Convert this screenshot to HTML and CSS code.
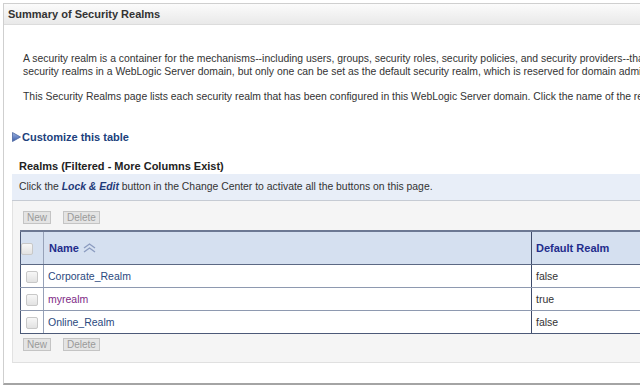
FILE: index.html
```html
<!DOCTYPE html>
<html lang="en">
<head>
  <meta charset="UTF-8" />
  <title>Summary of Security Realms</title>
  <link rel="stylesheet" href="styles.css">
</head>
<body>
  <div class="panel">
    <div class="title-bar">Summary of Security Realms</div>

    <div class="panel-body">
      <div class="intro">
        <p>A security realm is a container for the mechanisms--including users, groups, security roles, security policies, and security providers--that are used to protect WebLogic resources. You can have multiple<br>security realms in a WebLogic Server domain, but only one can be set as the default security realm, which is reserved for domain administrators.</p>
        <p>This Security Realms page lists each security realm that has been configured in this WebLogic Server domain. Click the name of the realm to explore and configure that realm.</p>
      </div>

      <a class="customize" href="#">
        <svg class="expand-icon" width="9" height="10" viewBox="0 0 9 10">
          <defs>
            <linearGradient id="tri" x1="0" y1="0" x2="0" y2="1">
              <stop offset="0" stop-color="#9db4e4"/>
              <stop offset="1" stop-color="#3c5ea8"/>
            </linearGradient>
          </defs>
          <polygon points="0.5,0.5 8.5,5 0.5,9.5" fill="url(#tri)" stroke="#4a64a0" stroke-width="0.8"/>
        </svg>
        Customize this table
      </a>

      <div class="realms">
        <h3 class="realms-title">Realms (Filtered - More Columns Exist)</h3>
        <div class="notice">Click the <em>Lock &amp; Edit</em> button in the Change Center to activate all the buttons on this page.</div>

        <div class="table-area">
          <div class="controls">
            <button disabled>New</button>
            <button disabled>Delete</button>
          </div>

          <table class="realm-table">
            <thead>
              <tr>
                <th class="col-check"><span class="checkbox"></span></th>
                <th class="col-name">Name
                  <svg class="sort-icon" width="15" height="10" viewBox="0 0 15 10">
                    <polyline points="2,5 7.5,1 13,5" fill="none" stroke="#8c9cc0" stroke-width="1.4"/>
                    <polyline points="2,9 7.5,5 13,9" fill="none" stroke="#8c9cc0" stroke-width="1.4"/>
                  </svg>
                </th>
                <th class="col-default">Default Realm</th>
              </tr>
            </thead>
            <tbody>
              <tr>
                <td class="col-check"><span class="checkbox"></span></td>
                <td class="col-name"><a href="#">Corporate_Realm</a></td>
                <td class="col-default">false</td>
              </tr>
              <tr>
                <td class="col-check"><span class="checkbox"></span></td>
                <td class="col-name"><a class="visited" href="#">myrealm</a></td>
                <td class="col-default">true</td>
              </tr>
              <tr>
                <td class="col-check"><span class="checkbox"></span></td>
                <td class="col-name"><a href="#">Online_Realm</a></td>
                <td class="col-default">false</td>
              </tr>
            </tbody>
          </table>

          <div class="controls controls-bottom">
            <button disabled>New</button>
            <button disabled>Delete</button>
          </div>
        </div>
      </div>
    </div>
  </div>
</body>
</html>
```

FILE: styles.css
```css
html, body {
  overflow: hidden;
}
body {
  margin: 0;
  padding: 0;
  background: #fff;
  font-family: "Liberation Sans", Arial, sans-serif;
  font-size: 10.4px;
  color: #333;
}
.panel {
  width: 1000px;
  height: 379px;
  margin: 3px 0 0 3px;
  border: 1px solid #cfcfcf;
  border-bottom: 2px solid #a4a4a4;
  display: flex;
  flex-direction: column;
}
.title-bar {
  height: 20px;
  line-height: 20px;
  padding-left: 4px;
  font-size: 11px;
  font-weight: bold;
  color: #333;
  background: linear-gradient(#fbfbfb, #e9e9e9);
  border-bottom: 1px solid #dcdcdc;
}
.panel-body {
  padding: 27px 0 0 8px;
}
.intro {
  padding-left: 11px;
}
.intro p {
  margin: 0 0 12px;
  line-height: 13px;
  white-space: nowrap;
}
.customize {
  display: flex;
  align-items: center;
  gap: 1px;
  margin-top: 27px;
  height: 14px;
  font-size: 11px;
  font-weight: bold;
  color: #203f7c;
  text-decoration: none;
}
.expand-icon {
  margin-top: -1px;
}
.realms {
  margin-top: 15px;
}
.realms-title {
  margin: 0;
  padding-left: 7px;
  height: 15px;
  line-height: 15px;
  font-size: 11px;
  color: #222;
}
.notice {
  height: 26px;
  line-height: 26px;
  padding-left: 7px;
  background: #e8eef8;
  border-bottom: 1px solid #c6cbd3;
  color: #333;
}
.notice em {
  font-weight: bold;
  color: #1f3a78;
}
.table-area {
  height: 161px;
  padding-left: 7px;
  background: #f5f5f5;
  border-left: 1px solid #e2e2e2;
  border-bottom: 1px solid #e0e0e0;
}
.controls {
  display: flex;
  gap: 12px;
  padding: 10px 0 0 3px;
  height: 12px;
  margin-bottom: 7px;
}
.controls-bottom {
  padding-top: 4px;
}
.controls button {
  font-family: "Liberation Sans", Arial, sans-serif;
  font-size: 10px;
  line-height: 10px;
  height: 13px;
  padding: 0 3px;
  color: #9a9a9a;
  background: #e4e4e4;
  border: 1px solid #c4c4c4;
  border-radius: 0;
}
.realm-table {
  width: 720px;
  border-collapse: collapse;
  background: #fff;
  border: 1px solid #4c5a78;
}
.realm-table th {
  height: 32px;
  text-align: left;
  font-size: 11px;
  color: #1f2d8c;
  background: #d5e0f0;
  border-top: 2px solid #6c7893;
  border-bottom: 1px solid #5c6984;
}
.realm-table td {
  height: 22px;
  font-size: 10.5px;
  color: #333;
  border-bottom: 1px solid #8e99b0;
}
.realm-table tbody tr:last-child td {
  border-bottom: 1px solid #4c5a78;
}
.col-check {
  width: 22px;
  padding: 0;
  text-align: center;
  border-right: 1px solid #97a2b8;
}
.col-name {
  width: 482px;
  padding: 0 0 0 4px;
}
th.col-name {
  padding-left: 5px;
}
.col-default {
  padding: 0 0 0 4px;
  border-left: 1px solid #3e4b6b;
}
.realm-table a {
  color: #2b4a80;
  text-decoration: none;
}
.realm-table a.visited {
  color: #7e2a86;
}
.sort-icon {
  vertical-align: -1px;
  margin-left: 0;
}
.checkbox {
  display: inline-block;
  width: 10px;
  height: 10px;
  vertical-align: middle;
  border: 1px solid #c8c8c8;
  border-radius: 2px;
  background: linear-gradient(#f7f7f7, #e2e2e2);
}
```
